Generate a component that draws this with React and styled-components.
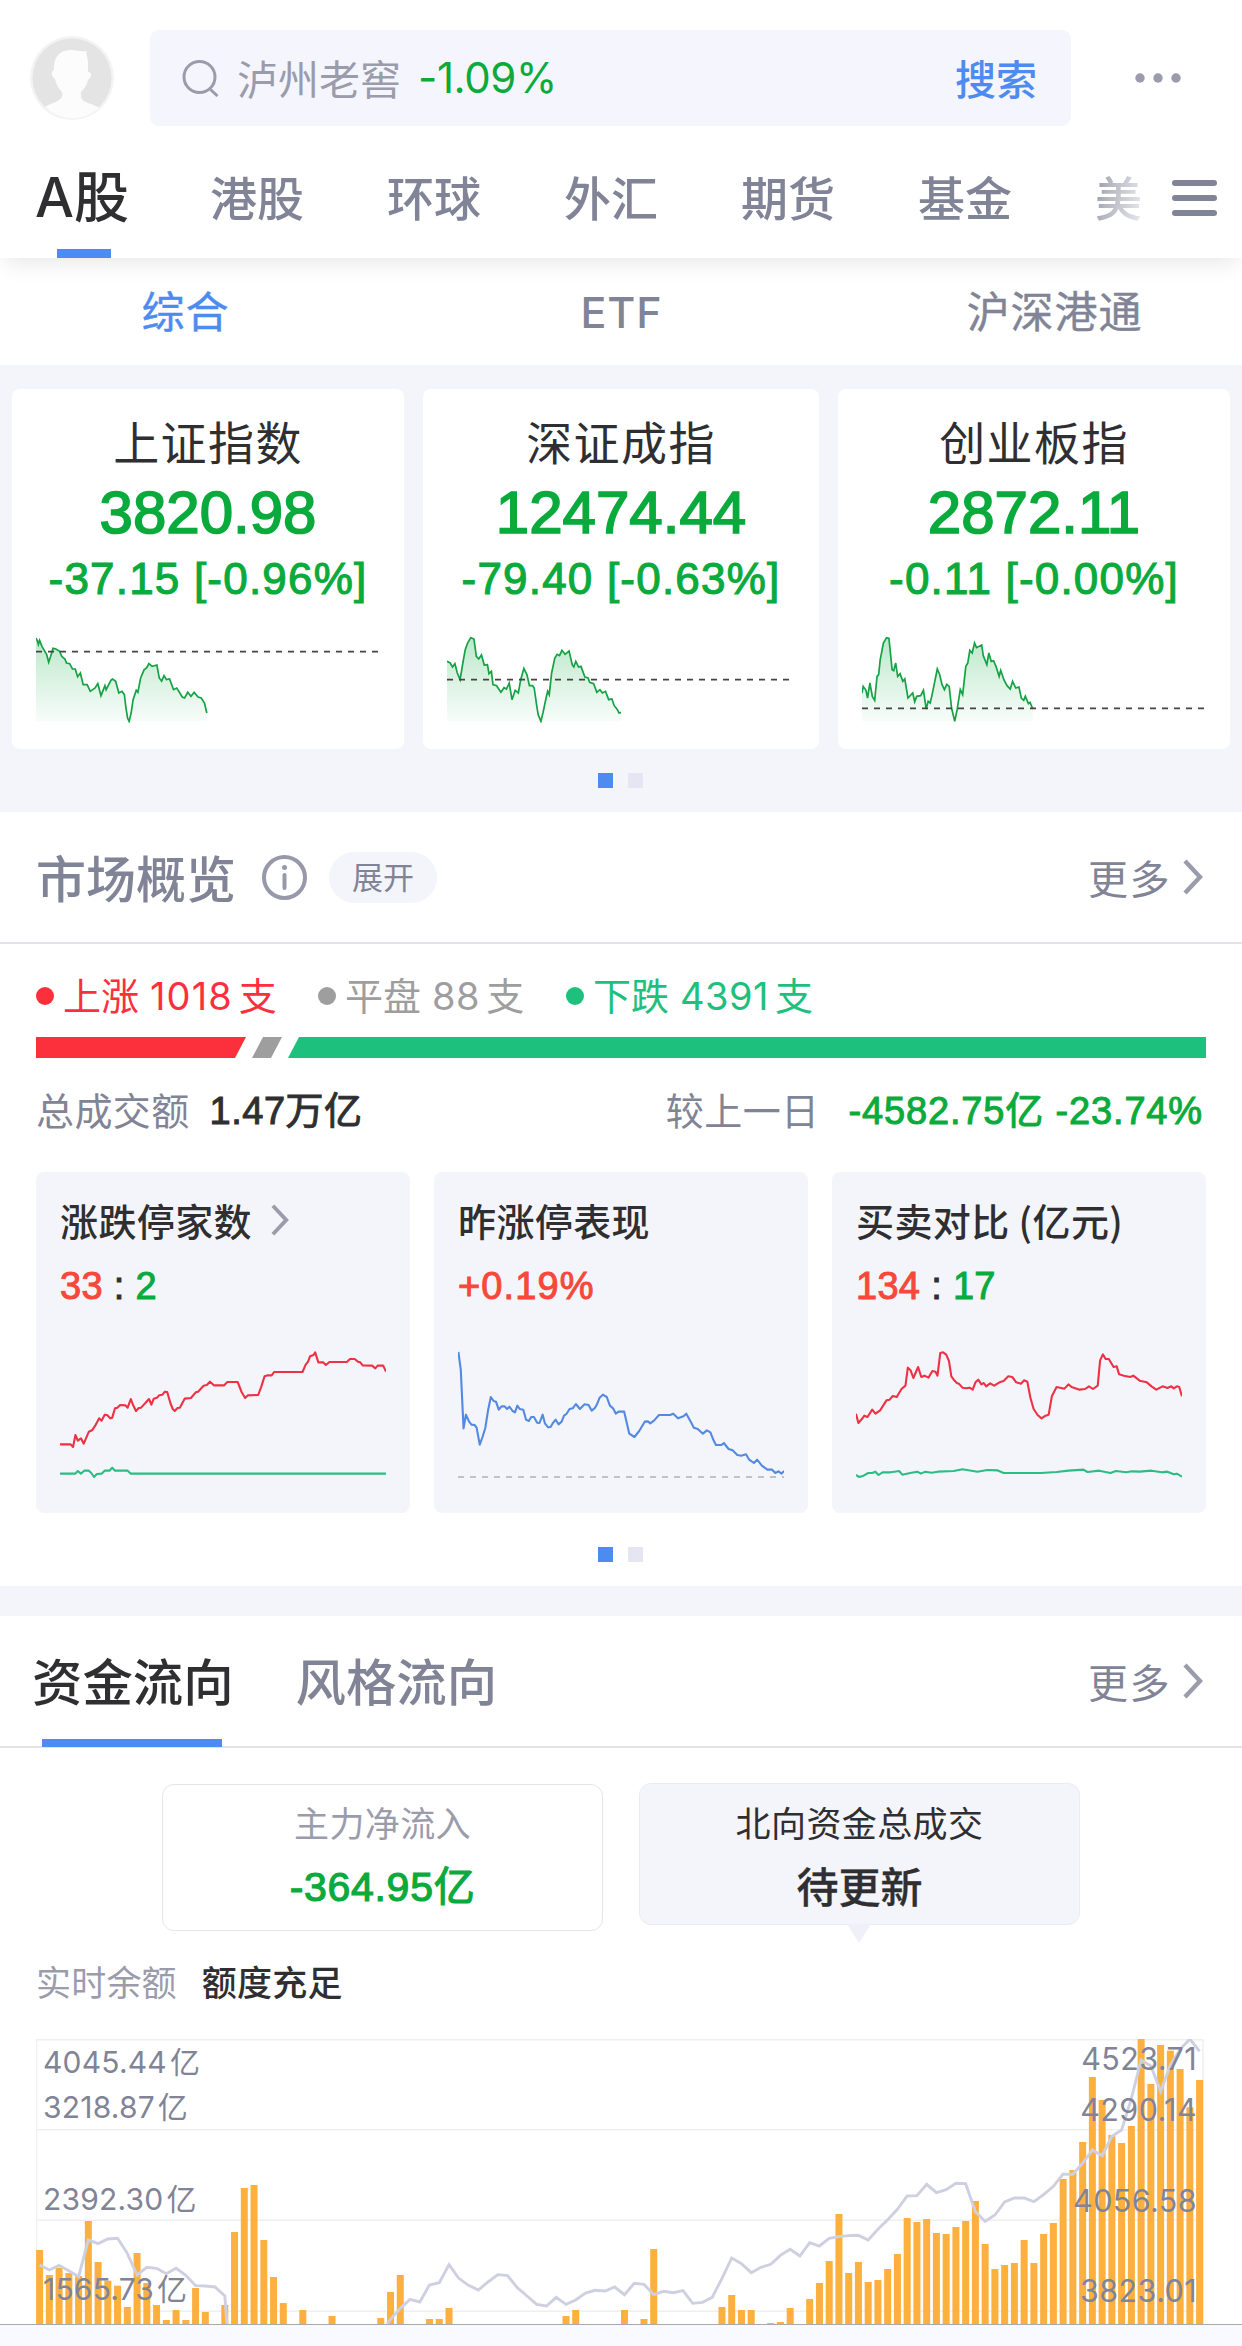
import styled, { createGlobalStyle } from "styled-components";

const colors = {
  text: "#2f2f31",
  gray: "#818496",
  light: "#9b9cab",
  blue: "#4e8bf0",
  green: "#0aaa3c",
  mint: "#1ec07e",
  red: "#fc2f3c",
  orange: "#f7483a",
  flat: "#9e9e9e",
  panel: "#f4f5fb",
  line: "#e4e4e8",
};

const cjk = `"Noto Sans CJK SC", sans-serif`;
const inter = `Inter, "Noto Sans CJK SC", sans-serif`;
const helvetica = `"Liberation Sans", "Noto Sans CJK SC", sans-serif`;

const GlobalStyle = createGlobalStyle`
  * {
    box-sizing: border-box;
  }
  body {
    margin: 0;
    background: #ffffff;
    font-family: ${cjk};
    color: ${colors.text};
    white-space: nowrap;
  }
  svg {
    display: block;
  }
`;

const Page = styled.div`
  width: 1242px;
  height: 2346px;
  overflow: hidden;
  display: flex;
  flex-direction: column;
  background: #fff;
`;

/* ---------- header ---------- */

const Header = styled.header`
  position: relative;
  z-index: 1;
  height: 258px;
  background: #fff;
  box-shadow: 0 8px 22px -4px rgba(0, 0, 0, 0.1);
`;

const TopRow = styled.div`
  display: flex;
  align-items: center;
  height: 156px;
  padding: 0 61px 0 30px;
`;

const SearchBox = styled.div`
  display: flex;
  align-items: center;
  width: 921px;
  height: 96px;
  margin: 0 64px 0 36px;
  padding: 0 34px 0 32px;
  border-radius: 9px;
  background: #f4f5fd;
`;

const SearchHint = styled.span`
  margin-left: 17px;
  padding-bottom: 3px;
  font-size: 41px;
  line-height: 56px;
  color: ${colors.light};
`;

const SearchChange = styled.span`
  margin-left: 17px;
  font-family: ${inter};
  font-size: 42px;
  line-height: 56px;
  letter-spacing: -0.4px;
  color: ${colors.green};
`;

const SearchButton = styled.span`
  margin-left: auto;
  padding-bottom: 3px;
  font-size: 41px;
  font-weight: 500;
  line-height: 56px;
  color: ${colors.blue};
`;

const NavRow = styled.nav`
  display: flex;
  justify-content: space-between;
  height: 102px;
  padding: 0 25px 0 35px;
`;

const NavList = styled.div`
  display: flex;
  width: 1109px;
  overflow: hidden;
  mask-image: linear-gradient(100deg, #000 1040px, rgba(0, 0, 0, 0.6) 1062px, rgba(0, 0, 0, 0.1) 1109px);
`;

const NavTab = styled.div`
  position: relative;
  flex: 0 0 177px;
  height: 102px;
  font-family: ${(p) => (p.$active ? inter : cjk)};
  font-size: ${(p) => (p.$active ? 55 : 47)}px;
  font-weight: 500;
  line-height: ${(p) => (p.$active ? 82 : 80)}px;
  color: ${(p) => (p.$active ? colors.text : colors.gray)};

  &:first-child {
    flex-basis: 175px;
  }

  &::after {
    content: "";
    display: ${(p) => (p.$active ? "block" : "none")};
    position: absolute;
    left: 22px;
    bottom: 0;
    width: 54px;
    height: 9px;
    background: ${colors.blue};
  }
`;

const MenuWrap = styled.div`
  padding-top: 24px;
`;

const SubTabs = styled.div`
  display: grid;
  grid-template-columns: 371px 501px 365px;
  height: 107px;
  text-align: center;
`;

const SubTab = styled.div`
  font-family: ${inter};
  font-size: 43px;
  font-weight: ${(p) => (p.$medium ? 500 : 400)};
  line-height: 108px;
  letter-spacing: 0.9px;
  color: ${(p) => (p.$active ? colors.blue : colors.gray)};
  -webkit-text-stroke: ${(p) => (p.$medium ? 0 : 0.4)}px currentColor;
`;

/* ---------- index cards ---------- */

const IndexSection = styled.section`
  height: 447px;
  padding: 24px 12px 0;
  background: ${colors.panel};
`;

const IndexCards = styled.div`
  display: grid;
  grid-template-columns: 392px 396px 392px;
  gap: 19px;
  height: 360px;
`;

const IndexCard = styled.div`
  display: flex;
  flex-direction: column;
  align-items: center;
  padding-top: 19px;
  border-radius: 8px;
  background: #fff;
`;

const IndexName = styled.div`
  font-size: 46px;
  line-height: 64px;
  letter-spacing: 1.4px;
`;

const IndexValue = styled.div`
  margin-top: 8px;
  font-family: ${helvetica};
  font-size: 60px;
  line-height: 66px;
  color: ${colors.green};
  -webkit-text-stroke: 1.7px ${colors.green};
`;

const IndexChange = styled.div`
  margin-top: 8px;
  font-family: ${helvetica};
  font-size: 44px;
  line-height: 50px;
  letter-spacing: 1.2px;
  color: ${colors.green};
  -webkit-text-stroke: 1.1px ${colors.green};
`;

const IndexChartWrap = styled.div`
  align-self: flex-start;
  margin: 33px 0 0 24px;
`;

const Pager = styled.div`
  display: flex;
  justify-content: center;
  gap: 15px;
  padding: ${(p) => p.$top}px 2px 0 0;
`;

const PagerDot = styled.i`
  width: 15px;
  height: 15px;
  background: ${(p) => (p.$active ? colors.blue : "#e6e6f3")};
`;

/* ---------- shared section head ---------- */

const SectionHead = styled.div`
  display: flex;
  align-items: center;
  height: 132px;
  padding: 0 39px 0 ${(p) => p.$left}px;
  border-bottom: 2px solid ${colors.line};
`;

const SectionTitle = styled.h2`
  position: relative;
  display: flex;
  align-items: center;
  height: 130px;
  margin: 0 ${(p) => p.$gap || 0}px 0 0;
  padding-bottom: 3px;
  font-size: ${(p) => p.$size || 50}px;
  font-weight: 500;
  color: ${(p) => (p.$active ? colors.text : colors.gray)};

  &::after {
    content: "";
    display: ${(p) => (p.$active ? "block" : "none")};
    position: absolute;
    left: 10px;
    bottom: -1px;
    width: 180px;
    height: 8px;
    background: ${colors.blue};
  }
`;

const Pill = styled.span`
  width: 108px;
  height: 51px;
  margin-left: 22px;
  border-radius: 26px;
  background: ${colors.panel};
  font-size: 31px;
  line-height: 48px;
  text-align: center;
  color: ${colors.gray};
`;

const More = styled.span`
  display: flex;
  align-items: center;
  gap: 12px;
  margin-left: auto;
  font-size: 40px;
  line-height: 56px;
  letter-spacing: 1.5px;
  color: ${colors.gray};
`;

/* ---------- market overview ---------- */

const Overview = styled.section`
  height: 774px;
`;

const Legend = styled.div`
  display: flex;
  align-items: center;
  height: 93px;
  padding: 10px 36px 0;
`;

const LegendItem = styled.div`
  display: flex;
  align-items: center;
  width: ${(p) => p.$width}px;
  font-family: ${inter};
  font-size: 38px;
  line-height: 50px;
  color: ${(p) => p.$color};
`;

const LegendDot = styled.i`
  width: 18px;
  height: 18px;
  margin-right: 9px;
  border-radius: 50%;
  background: currentColor;
`;

const LegendCount = styled.span`
  margin: 0 6px 0 11px;
  font-size: 38px;
  letter-spacing: ${(p) => p.$spacing}px;
`;

const RatioBar = styled.div`
  display: flex;
  gap: 6px;
  height: 21px;
  margin: 0 36px;
`;

const RatioPart = styled.div`
  flex: ${(p) => (p.$width ? `0 0 ${p.$width}px` : 1)};
  background: ${(p) => p.$color};
  clip-path: polygon(${(p) => p.$clip});
`;

const Turnover = styled.div`
  display: flex;
  align-items: center;
  height: 114px;
  padding: 0 39px 8px 36px;
`;

const TurnoverLabel = styled.span`
  margin-left: ${(p) => (p.$right ? "auto" : 0)};
  padding-bottom: 4px;
  font-size: 38px;
  line-height: 50px;
  letter-spacing: 0.4px;
  color: ${colors.gray};
`;

const TurnoverValue = styled.span`
  margin-left: ${(p) => (p.$green ? 29 : 20)}px;
  font-family: ${helvetica};
  font-size: 38px;
  line-height: 50px;
  letter-spacing: ${(p) => (p.$green ? 0.85 : 0.5)}px;
  color: ${(p) => (p.$green ? colors.green : colors.text)};
  -webkit-text-stroke: 1px currentColor;
`;

const StatCards = styled.div`
  display: grid;
  grid-template-columns: repeat(3, 374px);
  gap: 24px;
  height: 341px;
  padding: 0 36px;
`;

const StatCard = styled.div`
  padding: 18px 24px 0;
  border-radius: 8px;
  background: ${colors.panel};
`;

const StatTitle = styled.div`
  display: flex;
  align-items: center;
  gap: 19px;
  font-size: 38px;
  font-weight: 500;
  line-height: 60px;
  letter-spacing: 0.4px;
`;

const StatValue = styled.div`
  height: 62px;
  font-family: ${helvetica};
  font-size: 38px;
  line-height: 72px;
  letter-spacing: ${(p) => (p.$color ? 1.1 : 0.3)}px;
  color: ${(p) => p.$color || colors.text};
  -webkit-text-stroke: 1px currentColor;
`;

const StatPart = styled.span`
  color: ${(p) => p.$color};
`;

const StatChartWrap = styled.div`
  margin-top: 39px;
`;

const Divider = styled.div`
  height: 30px;
  background: ${colors.panel};
`;

/* ---------- money flow ---------- */

const FlowSwitch = styled.div`
  display: flex;
  justify-content: center;
  gap: 36px;
  height: 194px;
  padding-top: 35px;
`;

const FlowBox = styled.div`
  position: relative;
  width: 441px;
  height: ${(p) => (p.$active ? 142 : 147)}px;
  margin-top: ${(p) => (p.$active ? 0 : 1)}px;
  padding-top: ${(p) => (p.$active ? 16 : 15)}px;
  border: 1px solid ${(p) => (p.$active ? "#ecebf4" : "#e6e6ea")};
  border-radius: 12px;
  background: ${(p) => (p.$active ? colors.panel : "#fff")};
  text-align: center;

  &::after {
    content: "";
    display: ${(p) => (p.$active ? "block" : "none")};
    position: absolute;
    left: 207px;
    top: 140px;
    width: 24px;
    height: 19px;
    background: #f0f0f8;
    clip-path: polygon(0 0, 100% 0, 50% 100%);
  }
`;

const FlowName = styled.div`
  font-size: 35px;
  line-height: 44px;
  letter-spacing: 0.4px;
  color: ${(p) => (p.$active ? colors.text : colors.light)};
`;

const FlowValue = styled.div`
  margin-top: ${(p) => (p.$green ? 15 : 13)}px;
  font-family: ${(p) => (p.$green ? helvetica : cjk)};
  font-size: ${(p) => (p.$green ? 41 : 42)}px;
  font-weight: ${(p) => (p.$green ? 400 : 500)};
  line-height: 56px;
  letter-spacing: ${(p) => (p.$green ? 0.7 : 0)}px;
  color: ${(p) => (p.$green ? colors.green : colors.text)};
  -webkit-text-stroke: ${(p) => (p.$green ? 1.2 : 0.3)}px currentColor;
`;

const Balance = styled.div`
  display: flex;
  gap: 25px;
  height: 97px;
  padding: 14px 36px 0;
  font-size: 35px;
  line-height: 50px;
  letter-spacing: 0.2px;
  color: ${colors.light};

  b {
    font-weight: 500;
    color: ${colors.text};
  }
`;

const FlowChart = styled.div`
  position: relative;
  height: 285px;
  margin: 0 36px;
`;

const AxisLabel = styled.span`
  position: absolute;
  top: ${(p) => p.$y}px;
  ${(p) => (p.$right ? "right: 9px" : "left: 7px")};
  font-family: ${inter};
  font-size: ${(p) => (p.$right ? 30.5 : 30)}px;
  line-height: 40px;
  letter-spacing: ${(p) => (p.$right ? 0.4 : 0.2)}px;
  color: ${colors.gray};

  i {
    margin-left: 3px;
    font-style: normal;
  }
`;

const BottomBar = styled.div`
  flex: 1;
  border-top: 1px solid #a9a9ad;
  background: #f8faff;
`;

/* ---------- data ---------- */

const navTabs = ["A股", "港股", "环球", "外汇", "期货", "基金", "美股"];

const indexes = [
  {
    name: "上证指数",
    value: "3820.98",
    change: "-37.15 [-0.96%]",
    x: 91,
    base: 816,
    points:
      "91,775 95,785 97,794 100,782 106,800 112,812 118,825 123,848 128,830 134,806 141,808 150,814 156,830 164,838 168,850 176,852 183,868 190,868 196,891 203,880 210,915 220,915 228,935 240,925 247,912 255,948 265,918 268,930 280,902 284,898 292,905 300,940 308,935 314,945 318,985 322,1015 326,1025 331,1000 336,960 344,932 348,938 355,895 364,870 370,865 376,852 384,860 396,856 402,895 408,904 414,888 420,900 428,898 438,930 446,925 454,940 460,952 466,955 474,938 482,950 490,938 500,952 508,955 516,970 522,1000",
  },
  {
    name: "深证成指",
    value: "12474.44",
    change: "-79.40 [-0.63%]",
    x: 1130,
    base: 900,
    points:
      "1130,845 1138,850 1144,862 1150,852 1156,880 1163,900 1170,850 1176,810 1182,790 1190,774 1198,778 1204,830 1210,838 1217,826 1224,856 1232,855 1236,882 1242,875 1246,915 1255,918 1266,938 1274,924 1280,928 1287,910 1294,960 1302,932 1310,940 1316,900 1324,866 1332,886 1338,918 1346,918 1350,925 1356,975 1360,1005 1367,1025 1372,1000 1380,955 1384,935 1388,945 1394,880 1402,835 1408,824 1414,828 1420,812 1428,824 1438,814 1446,855 1450,862 1455,845 1462,862 1468,860 1478,892 1486,895 1490,908 1500,912 1508,938 1516,930 1522,940 1530,935 1538,960 1546,958 1552,978 1560,990 1564,1000 1569,998",
  },
  {
    name: "创业板指",
    value: "2872.11",
    change: "-0.11 [-0.00%]",
    x: 610,
    base: 986,
    points:
      "610,940 613,920 620,932 624,955 630,910 636,950 642,962 648,890 652,885 656,840 664,790 672,774 678,776 686,870 690,873 695,850 700,890 706,882 713,905 718,898 726,955 738,940 743,966 748,950 758,948 765,932 772,988 777,965 782,970 786,950 792,915 800,868 806,885 812,915 818,930 824,914 830,920 836,985 844,1025 850,990 858,930 864,945 872,860 877,850 882,812 888,820 894,790 899,804 912,796 916,828 925,855 930,820 936,845 942,843 948,860 956,890 960,872 968,900 976,918 984,928 990,905 998,925 1006,922 1012,955 1018,962 1022,950 1030,972 1034,968 1041,988",
  },
];

const limitUp =
  "151,854 178,854 184,862 190,826 196,843 204,836 211,852 224,816 232,812 240,798 250,776 256,783 264,765 270,766 278,776 283,774 290,746 296,744 303,736 316,737 322,744 330,718 336,737 343,754 350,745 356,744 376,718 382,735 388,717 396,714 402,707 410,705 416,696 422,697 430,730 436,748 441,754 448,745 454,744 466,717 482,715 494,698 500,696 514,678 522,676 530,666 540,677 566,677 574,667 600,667 610,697 619,715 626,707 652,706 660,680 668,650 676,647 686,647 692,637 764,637 772,615 778,606 783,590 792,586 796,578 804,608 816,608 823,616 832,607 876,607 884,598 896,598 904,606 910,608 916,617 940,618 948,626 954,618 968,618 975,636";
const limitDown =
  "151,942 190,942 196,934 204,942 212,933 224,933 230,940 237,952 244,943 256,942 264,933 276,933 283,924 290,933 322,933 330,942 975,942";
const lastLimit =
  "1157,577 1163,630 1170,806 1176,765 1184,786 1190,795 1198,796 1203,804 1211,855 1218,832 1225,805 1232,752 1239,712 1246,724 1252,726 1259,750 1266,740 1274,740 1280,748 1286,741 1294,754 1300,758 1306,738 1312,748 1321,750 1328,780 1335,784 1341,772 1348,772 1356,789 1362,790 1370,765 1376,792 1384,803 1390,802 1396,790 1403,780 1410,794 1418,786 1424,768 1430,763 1438,748 1446,746 1454,733 1464,748 1476,734 1486,736 1494,753 1502,745 1508,732 1514,714 1522,705 1532,712 1540,738 1548,746 1555,762 1562,756 1576,756 1589,822 1602,832 1614,814 1628,786 1636,785 1642,791 1652,782 1664,766 1692,766 1700,762 1712,776 1726,770 1733,762 1746,790 1752,804 1762,808 1775,822 1785,812 1794,818 1802,842 1808,856 1822,856 1828,850 1840,868 1850,872 1862,886 1872,888 1884,884 1892,900 1904,910 1912,900 1924,918 1938,930 1950,930 1958,940 1966,935 1974,942 1980,934";
const buyLine =
  "593,762 599,790 610,775 614,768 622,772 634,750 642,762 654,752 670,722 678,720 686,709 696,712 708,688 718,678 724,624 731,632 738,655 750,622 758,652 766,648 776,654 786,634 794,636 799,648 806,580 813,578 821,585 828,604 834,650 840,660 848,670 853,672 862,684 872,686 880,684 888,690 895,668 902,660 910,674 916,670 922,680 932,671 942,678 956,668 966,664 978,650 988,652 998,668 1010,672 1018,662 1026,666 1034,715 1042,748 1052,766 1062,776 1072,768 1080,765 1088,710 1100,682 1120,687 1130,674 1138,682 1158,690 1172,688 1182,680 1192,688 1204,678 1210,602 1217,584 1224,598 1232,598 1244,622 1252,620 1258,644 1270,648 1286,652 1294,648 1310,663 1328,668 1340,680 1352,690 1368,680 1380,685 1390,680 1396,686 1404,680 1410,682 1417,710";
const sellLine =
  "593,946 601,952 612,948 624,940 634,940 642,936 650,946 660,938 680,938 690,936 702,934 710,945 730,940 748,936 757,942 768,936 784,939 800,936 840,934 862,929 900,936 925,931 950,932 966,940 1000,940 1060,940 1100,937 1130,933 1168,930 1178,937 1208,933 1236,940 1250,934 1276,938 1290,935 1310,936 1340,933 1366,938 1380,936 1396,944 1404,942 1417,951";

// bar tops, 0 = no visible bar for that day
const barTops = [
  690, 765, 743, 759, 768, 603, 726, 782, 797, 861, 699, 789, 855, 900, 870, 900, 804, 876, 0, 855,
  636, 504, 495, 660, 771, 849, 0, 870, 0, 0, 888, 0, 0, 0, 0, 894, 816, 765, 0, 0,
  897, 897, 864, 0, 0, 0, 0, 0, 0, 0, 0, 0, 0, 0, 888, 870, 0, 0, 0, 0,
  870, 0, 897, 687, 0, 0, 0, 0, 0, 0, 861, 825, 870, 870, 0, 909, 906, 864, 0, 837,
  789, 723, 582, 759, 726, 786, 780, 747, 702, 594, 606, 597, 639, 642, 621, 603, 543, 672, 747, 735,
  729, 660, 729, 642, 609, 477, 450, 366, 171, 240, 345, 369, 318, 57, 192, 75, 92, 147, 262, 180,
];

const priceHead = [
  735, 750, 736, 752, 770, 660, 671, 657, 655, 700, 765, 742, 745, 761, 745, 766, 797, 798, 801, 828,
];

// starts at day 36
const priceTail = [
  898, 865, 838, 846, 795, 788, 734, 775, 796, 810, 786, 764, 767, 803, 828, 853, 858, 832, 853, 840,
  819, 811, 813, 801, 824, 790, 793, 824, 814, 818, 812, 850, 847, 832, 775, 714, 731, 758, 742, 733,
  706, 688, 708, 668, 678, 655, 650, 647, 646, 660, 628, 599, 568, 528, 527, 493, 518, 509, 490, 491,
  575, 604, 585, 546, 534, 534, 545, 524, 499, 462, 463, 430, 390, 407, 349, 330, 235, 120, 138, 214,
  135, 88, 57, 94,
];

const dayX = (i) => 3.6 + i * 9.748;
const toPoints = (list, start) => list.map((y, i) => `${dayX(i + start).toFixed(1)},${y}`).join(" ");

/* ---------- drawings ---------- */

function Avatar() {
  return (
    <svg width="84" height="84" viewBox="0 0 84 84">
      <circle cx="42" cy="42" r="42" fill="#f3f3f3" />
      <circle cx="42" cy="42" r="39.5" fill="#e4e4e4" />
      <path
        d="M24 34C23 20 31 14 41 14c6 0 10 2 16 1-2 3 1 6 1 12v9c4-1 4 5 0 8-1 5-4 9-7 12-1 8 3 9 7 11 5 2 9 3 11 5A39.500 39.500 0 0 1 15 71c4-3 10-4 14-7 3-2 4-4 3-8-4-4-6-8-7-13-4-3-4-8-1-9z"
        fill="#fcfcfc"
      />
    </svg>
  );
}

function SearchIcon() {
  return (
    <svg width="38" height="38" viewBox="0 0 38 38" fill="none" stroke={colors.light} strokeWidth="3">
      <circle cx="17.500" cy="18" r="15.500" />
      <path d="M28.500 30.500l7 6.500" />
    </svg>
  );
}

function Chevron({ width = 20, height = 36 }) {
  return (
    <svg width={width} height={height} viewBox="0 0 20 36" fill="none">
      <path d="M2 2l15 16L2 34" stroke={colors.light} strokeWidth="4.400" />
    </svg>
  );
}

function InfoIcon() {
  return (
    <svg width="45" height="45" viewBox="0 0 45 45" fill="none">
      <circle cx="22.500" cy="22.500" r="20.500" stroke="#9798a9" strokeWidth="4" />
      <circle cx="22.500" cy="12.500" r="2.500" fill="#9798a9" />
      <path d="M22.500 20v13" stroke="#9798a9" strokeWidth="4" strokeLinecap="round" />
    </svg>
  );
}

function IndexChart({ id, x, base, points }) {
  const last = points.split(" ").pop().split(",")[0];
  return (
    <svg width="344" height="86" viewBox={`${x} 772 868 258`} preserveAspectRatio="none">
      <defs>
        <linearGradient id={id} x1="0" y1="0" x2="0" y2="1">
          <stop offset="0" stopColor={colors.green} stopOpacity="0.27" />
          <stop offset="1" stopColor={colors.green} stopOpacity="0.03" />
        </linearGradient>
      </defs>
      <polygon points={`${x},1025 ${points} ${last},1025`} fill={`url(#${id})`} />
      <polyline points={points} fill="none" stroke="#14a245" strokeWidth="1.700" vectorEffect="non-scaling-stroke" />
      <line
        x1={x}
        x2={x + 864}
        y1={base}
        y2={base}
        stroke="#444"
        strokeWidth="1.600"
        strokeDasharray="6 6"
        vectorEffect="non-scaling-stroke"
      />
    </svg>
  );
}

function StatChart({ x, dashed, lines }) {
  return (
    <svg width="326" height="128" viewBox={`${x} 574 824 384`} preserveAspectRatio="none">
      {dashed && (
        <line
          x1={x}
          x2={x + 824}
          y1="952"
          y2="952"
          stroke="#8d8f97"
          strokeWidth="1"
          strokeDasharray="6 6"
          vectorEffect="non-scaling-stroke"
        />
      )}
      {lines.map(([stroke, points]) => (
        <polyline
          key={stroke}
          points={points}
          fill="none"
          stroke={stroke}
          strokeWidth="2.100"
          strokeLinejoin="round"
          vectorEffect="non-scaling-stroke"
        />
      ))}
    </svg>
  );
}

function TurnoverChart() {
  return (
    <svg width="1170" height="285" viewBox="0 57 1170 855" preserveAspectRatio="none">
      {[59, 329, 601, 874].map((y) => (
        <line key={y} x1="0" x2="1167" y1={y} y2={y} stroke="#efeff2" strokeWidth="1.500" vectorEffect="non-scaling-stroke" />
      ))}
      <line x1="0.500" x2="0.500" y1="59" y2="912" stroke="#efeff2" strokeWidth="1.500" />
      <line x1="1167" x2="1167" y1="59" y2="912" stroke="#efeff2" strokeWidth="1.500" />
      {barTops.map((y, i) => y > 0 && <rect key={i} x={dayX(i) - 3.5} y={y} width="7" height={912 - y} fill="#fdb03d" />)}
      <g fill="none" stroke="#cfcfe2" strokeWidth="2.900">
        <polyline points={`${toPoints(priceHead, 0)} 191,912`} vectorEffect="non-scaling-stroke" />
        <polyline points={`351,912 ${toPoints(priceTail, 36)}`} vectorEffect="non-scaling-stroke" />
      </g>
    </svg>
  );
}

function PagerDots({ top }) {
  return (
    <Pager $top={top}>
      <PagerDot $active />
      <PagerDot />
    </Pager>
  );
}

export default function App() {
  return (
    <>
      <GlobalStyle />
      <Page>
        <Header>
          <TopRow>
            <Avatar />
            <SearchBox>
              <SearchIcon />
              <SearchHint>泸州老窖</SearchHint>
              <SearchChange>-1.09%</SearchChange>
              <SearchButton>搜索</SearchButton>
            </SearchBox>
            <svg width="46" height="10" viewBox="0 0 46 10" fill={colors.light}>
              <circle cx="5" cy="5" r="4.700" />
              <circle cx="23" cy="5" r="4.700" />
              <circle cx="41" cy="5" r="4.700" />
            </svg>
          </TopRow>
          <NavRow>
            <NavList>
              {navTabs.map((tab, i) => (
                <NavTab key={tab} $active={i === 0}>
                  {tab}
                </NavTab>
              ))}
            </NavList>
            <MenuWrap>
              <svg width="45" height="36" viewBox="0 0 45 36" fill={colors.gray}>
                <rect width="45" height="6" rx="3" />
                <rect y="15" width="45" height="6" rx="3" />
                <rect y="30" width="45" height="6" rx="3" />
              </svg>
            </MenuWrap>
          </NavRow>
        </Header>

        <SubTabs>
          <SubTab $active>综合</SubTab>
          <SubTab $medium>ETF</SubTab>
          <SubTab>沪深港通</SubTab>
        </SubTabs>

        <IndexSection>
          <IndexCards>
            {indexes.map((item, i) => (
              <IndexCard key={item.name}>
                <IndexName>{item.name}</IndexName>
                <IndexValue>{item.value}</IndexValue>
                <IndexChange>{item.change}</IndexChange>
                <IndexChartWrap>
                  <IndexChart id={`fill-${i}`} x={item.x} base={item.base} points={item.points} />
                </IndexChartWrap>
              </IndexCard>
            ))}
          </IndexCards>
          <PagerDots top={24} />
        </IndexSection>

        <Overview>
          <SectionHead $left={36}>
            <SectionTitle $gap={26}>市场概览</SectionTitle>
            <InfoIcon />
            <Pill>展开</Pill>
            <More>
              更多
              <Chevron />
            </More>
          </SectionHead>
          <Legend>
            <LegendItem $width={282} $color={colors.red}>
              <LegendDot />
              上涨<LegendCount $spacing={1.1}>1018</LegendCount>支
            </LegendItem>
            <LegendItem $width={248} $color={colors.flat}>
              <LegendDot />
              平盘<LegendCount $spacing={0.6}>88</LegendCount>支
            </LegendItem>
            <LegendItem $width={300} $color={colors.mint}>
              <LegendDot />
              下跌<LegendCount $spacing={0.5}>4391</LegendCount>支
            </LegendItem>
          </Legend>
          <RatioBar>
            <RatioPart $width={210} $color={colors.red} $clip="0 0, 100% 0, calc(100% - 11px) 100%, 0 100%" />
            <RatioPart $width={30} $color={colors.flat} $clip="11px 0, 100% 0, calc(100% - 11px) 100%, 0 100%" />
            <RatioPart $color={colors.mint} $clip="11px 0, 100% 0, 100% 100%, 0 100%" />
          </RatioBar>
          <Turnover>
            <TurnoverLabel>总成交额</TurnoverLabel>
            <TurnoverValue>1.47万亿</TurnoverValue>
            <TurnoverLabel $right>较上一日</TurnoverLabel>
            <TurnoverValue $green>-4582.75亿 -23.74%</TurnoverValue>
          </Turnover>
          <StatCards>
            <StatCard>
              <StatTitle>
                涨跌停家数
                <Chevron width={18} height={32} />
              </StatTitle>
              <StatValue>
                <StatPart $color={colors.orange}>33</StatPart> : <StatPart $color={colors.green}>2</StatPart>
              </StatValue>
              <StatChartWrap>
                <StatChart
                  x={151}
                  lines={[
                    ["#ee3145", limitUp],
                    ["#2bbd83", limitDown],
                  ]}
                />
              </StatChartWrap>
            </StatCard>
            <StatCard>
              <StatTitle>昨涨停表现</StatTitle>
              <StatValue $color={colors.orange}>+0.19%</StatValue>
              <StatChartWrap>
                <StatChart x={1156} dashed lines={[["#5489e2", lastLimit]]} />
              </StatChartWrap>
            </StatCard>
            <StatCard>
              <StatTitle>买卖对比 (亿元)</StatTitle>
              <StatValue>
                <StatPart $color={colors.orange}>134</StatPart> : <StatPart $color={colors.green}>17</StatPart>
              </StatValue>
              <StatChartWrap>
                <StatChart
                  x={593}
                  lines={[
                    ["#ee3145", buyLine],
                    ["#2bbd83", sellLine],
                  ]}
                />
              </StatChartWrap>
            </StatCard>
          </StatCards>
          <PagerDots top={34} />
        </Overview>

        <Divider />

        <section>
          <SectionHead $left={32}>
            <SectionTitle $active $gap={62} $size={50.4}>
              资金流向
            </SectionTitle>
            <SectionTitle $size={50.4}>风格流向</SectionTitle>
            <More>
              更多
              <Chevron />
            </More>
          </SectionHead>
          <FlowSwitch>
            <FlowBox>
              <FlowName>主力净流入</FlowName>
              <FlowValue $green>-364.95亿</FlowValue>
            </FlowBox>
            <FlowBox $active>
              <FlowName $active>北向资金总成交</FlowName>
              <FlowValue>待更新</FlowValue>
            </FlowBox>
          </FlowSwitch>
          <Balance>
            <span>实时余额</span>
            <b>额度充足</b>
          </Balance>
          <FlowChart>
            <TurnoverChart />
            <AxisLabel $y={3}>4045.44<i>亿</i></AxisLabel>
            <AxisLabel $y={48}>3218.87<i>亿</i></AxisLabel>
            <AxisLabel $y={140}>2392.30<i>亿</i></AxisLabel>
            <AxisLabel $y={230}>1565.73<i>亿</i></AxisLabel>
            <AxisLabel $right $y={0}>4523.71</AxisLabel>
            <AxisLabel $right $y={51}>4290.14</AxisLabel>
            <AxisLabel $right $y={142}>4056.58</AxisLabel>
            <AxisLabel $right $y={232}>3823.01</AxisLabel>
          </FlowChart>
        </section>
        <BottomBar />
      </Page>
    </>
  );
}
